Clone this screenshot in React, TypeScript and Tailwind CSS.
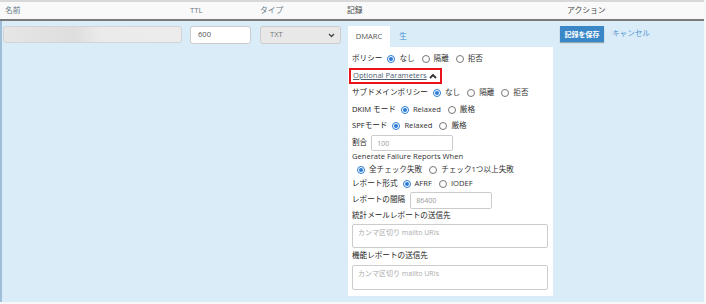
import React from "react";

const font = { fontFamily: '"Open Sans", "Noto Sans CJK JP", sans-serif' };

function Radio({ checked, label }: { checked?: boolean; label: string }) {
  return (
    <span className="inline-flex items-center gap-[4px] mr-[7px] whitespace-nowrap">
      <span
        className={
          "w-[8px] h-[8px] rounded-full border inline-flex items-center justify-center bg-white " +
          (checked ? "border-[#2a7bd6]" : "border-[#777]")
        }
      >
        {checked && <span className="w-[4px] h-[4px] rounded-full bg-[#2a7bd6]" />}
      </span>
      <span className="text-[#333]">{label}</span>
    </span>
  );
}

function Row({ label, h, children }: { label: string; h: string; children?: React.ReactNode }) {
  return (
    <div className={"flex items-center whitespace-nowrap " + h}>
      <span className="text-[#222] mr-[5px]">{label}</span>
      {children}
    </div>
  );
}

export default function App() {
  return (
    <div className="w-[706px] h-[304px] bg-[#f8f8f8] text-[7.6px] leading-none" style={font}>
      <div className="w-[704px] border-t-2 border-[#d8d8d8] bg-[#f9f9f9]">
        {/* header */}
        <div className="flex h-[19px] items-center text-[#6b7a88] text-[7.8px] border-b-2 border-[#7a7a7a]">
          <div className="w-[186px] pl-[5px]">名前</div>
          <div className="w-[70px] pl-[4px]">TTL</div>
          <div className="w-[87px] pl-[4px]">タイプ</div>
          <div className="w-[220px] pl-[4px] text-[#444]">記録</div>
          <div className="pl-[4px] text-[#444]">アクション</div>
        </div>
        {/* row */}
        <div className="flex h-[281px] bg-[#d9ecf7] border-l-2 border-[#9fbfd8] pt-[5px]">
          <div className="w-[183px] pl-[1px]">
            <div className="h-[17px] w-[179px] rounded-[3px] border border-[#d4d4d4] bg-[linear-gradient(90deg,#e6e6e6_0%,#dedede_40%,#ebebeb_55%,#ececec_100%)]" />
          </div>
          <div className="w-[72px] pl-[5px]">
            <div className="h-[18px] w-[61px] rounded-[3px] bg-white border border-[#ccc] flex items-center pl-[7px] text-[#555]">600</div>
          </div>
          <div className="w-[88px] pl-[3px]">
            <div className="h-[18px] w-[81px] rounded-[3px] bg-[#e8e8e8] border border-[#ccc] flex items-center justify-between pl-[9px] pr-[5px] text-[#777]">
              <span>TXT</span>
              <svg width="7" height="5" viewBox="0 0 7 5"><path d="M1 1l2.5 2.5L6 1" stroke="#444" strokeWidth="1.3" fill="none" /></svg>
            </div>
          </div>
          <div className="w-[215px] pl-[3px]">
            <div className="flex h-[21px]">
              <div className="bg-white w-[42px] flex items-center justify-center text-[#555]">DMARC</div>
              <div className="w-[26px] flex items-center justify-center text-[#4a8fd0]">生</div>
            </div>
            <div className="bg-white w-[205px] h-[249px] px-[4px] pt-[4px]">
              <Row label="ポリシー" h="h-[16px]">
                <Radio checked label="なし" />
                <Radio label="隔離" />
                <Radio label="拒否" />
              </Row>
              <div className="h-[18px] flex items-center">
                <span className="inline-flex items-center h-[16px] border-2 border-[#e8141a] pl-[2px] pr-[3px] -ml-[3px] whitespace-nowrap">
                  <span className="text-[#4d5e70] underline">Optional Parameters</span>
                  <svg className="ml-[2px]" width="8" height="6" viewBox="0 0 8 6"><path d="M1 5l3-3 3 3" stroke="#333" strokeWidth="1.8" fill="none" /></svg>
                </span>
              </div>
              <Row label="サブドメインポリシー" h="h-[16.5px]">
                <Radio checked label="なし" />
                <Radio label="隔離" />
                <Radio label="拒否" />
              </Row>
              <Row label="DKIM モード" h="h-[16.5px]">
                <Radio checked label="Relaxed" />
                <Radio label="厳格" />
              </Row>
              <Row label="SPFモード" h="h-[16.5px]">
                <Radio checked label="Relaxed" />
                <Radio label="厳格" />
              </Row>
              <div className="flex items-center h-[17px]">
                <span className="text-[#222] mr-[4px]">割合</span>
                <div className="h-[16px] w-[82px] border border-[#ccc] rounded-[2px] flex items-center pl-[5px] text-[#999] text-[7px]">100</div>
              </div>
              <div className="h-[11px] flex items-center text-[#333] whitespace-nowrap">Generate Failure Reports When</div>
              <div className="h-[15px] flex items-center pl-[5px]">
                <Radio checked label="全チェック失敗" />
                <Radio label="チェック1つ以上失敗" />
              </div>
              <Row label="レポート形式" h="h-[13px]">
                <Radio checked label="AFRF" />
                <Radio label="IODEF" />
              </Row>
              <div className="flex items-center h-[19px]">
                <span className="text-[#222] mr-[5px]">レポートの間隔</span>
                <div className="h-[17px] w-[82px] border border-[#ccc] rounded-[2px] flex items-center pl-[5px] text-[#999] text-[7px]">86400</div>
              </div>
              <div className="h-[13px] flex items-center text-[#222]">統計メールレポートの送信先</div>
              <div className="mt-[1.5px] h-[24px] w-[196px] border border-[#ccc] rounded-[2px] pl-[5px] pt-[4px] text-[#aaa] text-[7px]">カンマ区切り mailto URIs</div>
              <div className="h-[16px] flex items-center text-[#222]">機能レポートの送信先</div>
              <div className="mt-[1px] h-[25px] w-[196px] border border-[#ccc] rounded-[2px] pl-[5px] pt-[4px] text-[#aaa] text-[7px]">カンマ区切り mailto URIs</div>
            </div>
          </div>
          <div className="flex items-start gap-[8px]">
            <div className="h-[16px] w-[44px] bg-[#3a87c8] text-white flex items-center justify-center text-[7px] font-bold shadow-[0_1px_1px_rgba(0,0,0,0.3)]">記録を保存</div>
            <div className="h-[16px] flex items-center text-[#5a9ad6]">キャンセル</div>
          </div>
        </div>
      </div>
    </div>
  );
}
